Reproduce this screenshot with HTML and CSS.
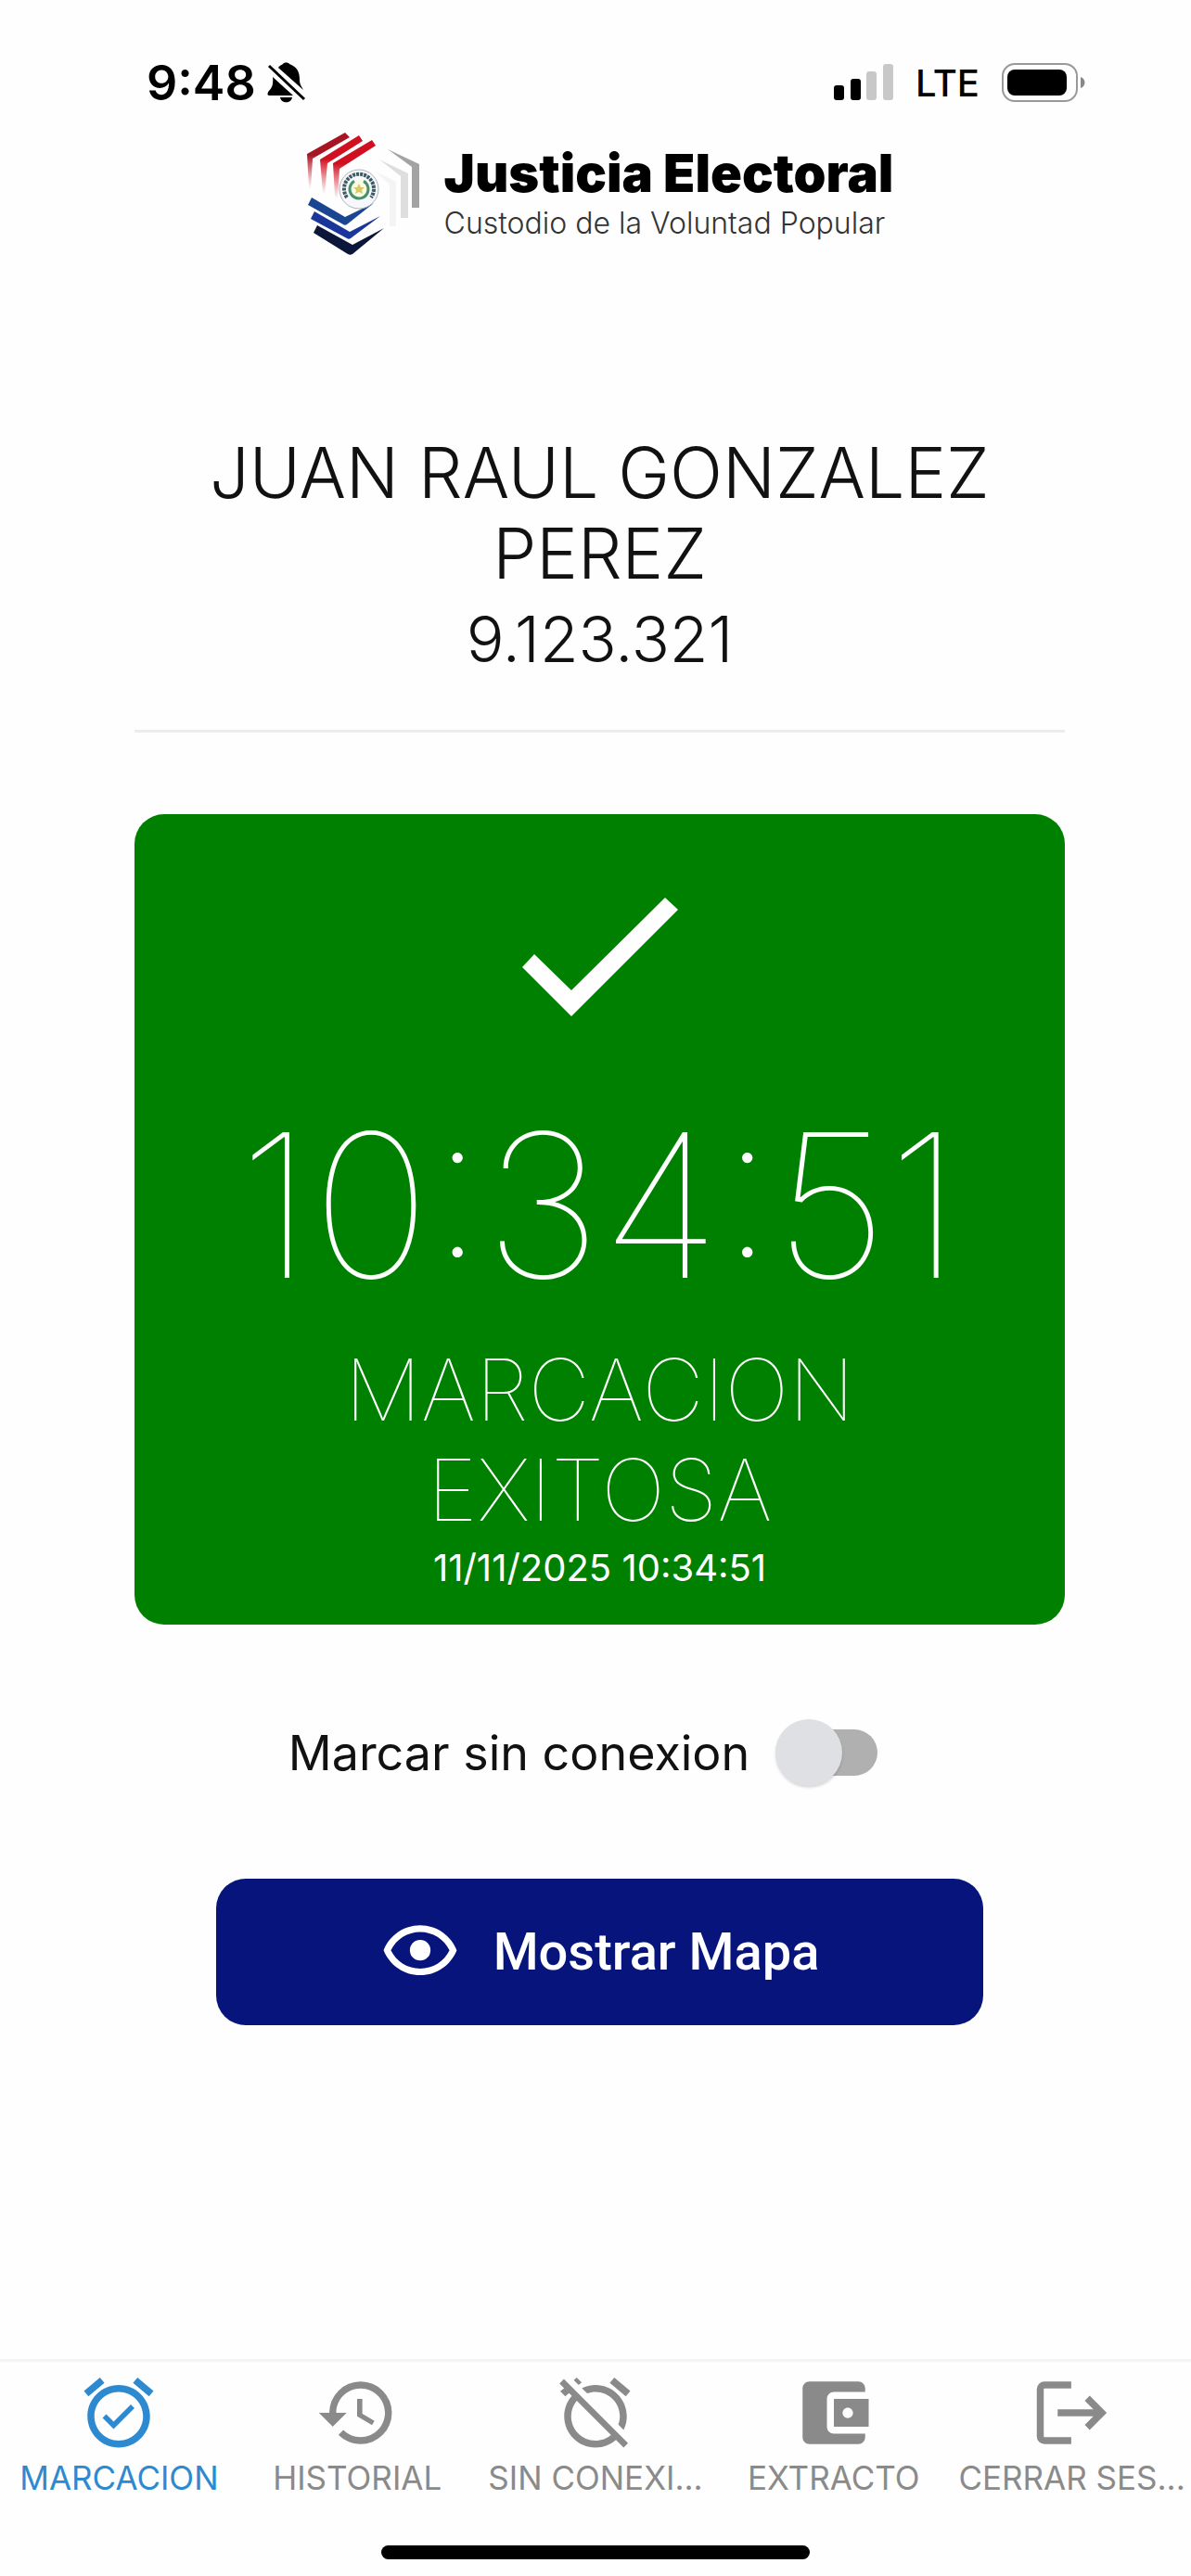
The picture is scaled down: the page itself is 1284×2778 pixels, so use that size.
FILE: index.html
```html
<!DOCTYPE html>
<html lang="es">
<head>
    <meta charset="UTF-8">
    <meta name="viewport" content="width=device-width, initial-scale=1.0">
    <title>Justicia Electoral - Marcacion</title>
    <link rel="stylesheet" href="styles.css">
</head>
<body>
    <div class="status-bar">
        <div class="status-left">
            <span class="status-time">9:48</span>
            <svg class="icon-bell" viewBox="0 0 42 44" aria-hidden="true">
                <path d="M12 6C14 3 16 3 17 2c1-2 6-2 7 0 8 3 11 8 11 17 0 5 2 7 4 11z"/>
                <path d="M6 16l22 20H2c-2 0-2-3 0-5 3-3 5-7 4-15z"/>
                <path d="M14 38h13c-1 7-12 7-13 0z"/>
                <path class="bell-slash" d="M2 4l38 36"/>
            </svg>
        </div>
        <div class="status-right">
            <svg class="icon-signal" viewBox="0 0 64 40" aria-hidden="true">
                <rect x="0" y="23" width="11" height="16" rx="3"/>
                <rect x="18" y="16" width="11" height="23" rx="3"/>
                <rect class="signal-off" x="35" y="8" width="11" height="31" rx="3"/>
                <rect class="signal-off" x="53" y="0" width="11" height="39" rx="3"/>
            </svg>
            <span class="status-network">LTE</span>
            <svg class="icon-battery" viewBox="0 0 90 42" aria-hidden="true">
                <rect class="battery-case" x="1" y="1" width="80" height="40" rx="13"/>
                <rect x="6" y="7" width="64" height="28" rx="8"/>
                <path class="battery-tip" d="M85 15c6 2 6 10 0 12z"/>
            </svg>
        </div>
    </div>

    <main class="content">
        <header class="brand">
            <svg class="brand-logo" viewBox="0 0 124 134" aria-hidden="true">
                <defs>
                    <linearGradient id="fadeRed" x1="0" y1="0" x2="0" y2="1">
                        <stop offset="0.4" stop-color="#d01020"/>
                        <stop offset="1" stop-color="#e04050" stop-opacity="0"/>
                    </linearGradient>
                    <linearGradient id="darkRed" x1="0" y1="0" x2="0" y2="1">
                        <stop offset="0.4" stop-color="#a81522"/>
                        <stop offset="1" stop-color="#d04050" stop-opacity="0"/>
                    </linearGradient>
                </defs>
                <path fill="url(#darkRed)" d="M1 24L42 1l5 5L7 29 5 62 3 60z"/>
                <path fill="url(#fadeRed)" d="M15 30L57 4l4 6-38 24-3 34-2-2z"/>
                <path fill="url(#fadeRed)" d="M29 34L71 9l4 6-39 25-2 33-3-4z"/>
                <path fill="#1a4590" d="M6 71l36 21 31-15-29 23c-1 1-3 1-4 0L2 79z"/>
                <path fill="#1b369b" d="M9 86l38 22 33-17-32 24c-1 1-3 1-4 0L5 94z"/>
                <path fill="#0b1638" d="M12 101l38 21 34-18-34 28c-2 1-3 1-5 0L8 109z"/>
                <path fill="#a3a3a3" d="M88 19l34 16v47h-8V38z"/>
                <path fill="#dedede" d="M79 30l31 15v48h-8V48z"/>
                <path fill="#f4f4f4" d="M75 43l22 11v48h-7V57z"/>
                <circle cx="57" cy="62" r="21" fill="#f7f8fb" stroke="#aeb3b8"/>
                <path d="M44 71a16 16 0 1 1 26 0" fill="none" stroke="#3f5a62" stroke-width="4" stroke-dasharray="3 1"/>
                <circle cx="57" cy="62" r="10" fill="#fbfae6" stroke="#459268" stroke-width="3" stroke-dasharray="52 11" transform="rotate(-60 57 62)"/>
                <path d="M57 56l2 4h4l-3 3 1 4-4-2-4 2 1-4-3-3h4z" fill="#d8cb66"/>
            </svg>
            <div class="brand-text">
                <h1>Justicia Electoral</h1>
                <p>Custodio de la Voluntad Popular</p>
            </div>
        </header>

        <section class="person">
            <h2>JUAN RAUL GONZALEZ PEREZ</h2>
            <p>9.123.321</p>
        </section>

        <section class="result-card">
            <svg class="icon-check" viewBox="0 0 168 128" aria-hidden="true">
                <path d="M0 75l13-14 40 39L154 0l14 13L53 128z"/>
            </svg>
            <time class="result-clock">10:34:51</time>
            <p class="result-message">MARCACION EXITOSA</p>
            <time class="result-date">11/11/2025 10:34:51</time>
        </section>

        <div class="offline-row">
            <label for="offline">Marcar sin conexion</label>
            <input type="checkbox" id="offline" class="switch">
        </div>

        <button type="button" class="map-button">
            <svg class="icon-eye" viewBox="0 0 24 24" aria-hidden="true">
                <path d="M12 6c3.79 0 7.17 2.13 8.82 5.5C19.17 14.87 15.79 17 12 17s-7.17-2.13-8.82-5.5C4.83 8.13 8.21 6 12 6m0-2C7 4 2.73 7.11 1 11.5 2.73 15.89 7 19 12 19s9.27-3.11 11-7.5C21.27 7.11 17 4 12 4z"/>
                <circle cx="12" cy="11.5" r="3.1"/>
            </svg>
            Mostrar Mapa
        </button>
    </main>

    <nav class="tab-bar">
        <div class="tabs">
            <a href="#marcacion" class="tab active">
                <svg viewBox="0 0 24 24" aria-hidden="true"><path d="M22 5.72l-4.6-3.86-1.29 1.53 4.6 3.86L22 5.72zM7.88 3.39L6.6 1.86 2 5.71l1.29 1.53 4.59-3.85zM12 4c-4.97 0-9 4.03-9 9s4.02 9 9 9c4.97 0 9-4.03 9-9s-4.03-9-9-9zm0 16c-3.87 0-7-3.13-7-7s3.13-7 7-7 7 3.13 7 7-3.13 7-7 7zm-1.46-5.47L8.41 12.4l-1.06 1.06 3.18 3.18 6-6-1.06-1.06-4.93 4.95z"/></svg>
                <span>MARCACION</span>
            </a>
            <a href="#historial" class="tab">
                <svg viewBox="0 0 24 24" aria-hidden="true"><path d="M13 3a9 9 0 0 0-9 9H1l3.89 3.89.07.14L9 12H6c0-3.87 3.13-7 7-7s7 3.13 7 7-3.13 7-7 7c-1.93 0-3.68-.79-4.94-2.06l-1.42 1.42C8.27 19.99 10.51 21 13 21a9 9 0 0 0 0-18zm-1 5v5l4.28 2.54.72-1.21-3.5-2.08V8H12z"/></svg>
                <span>HISTORIAL</span>
            </a>
            <a href="#sin-conexion" class="tab">
                <svg viewBox="0 0 24 24" aria-hidden="true"><path d="M12 6c3.87 0 7 3.13 7 7 0 .84-.16 1.65-.43 2.4l1.52 1.52c.58-1.19.91-2.51.91-3.92 0-4.97-4.03-9-9-9-1.41 0-2.73.33-3.92.91L9.6 6.43C10.35 6.16 11.16 6 12 6zm10-.28l-4.6-3.86-1.29 1.53 4.6 3.86L22 5.72zM2.92 2.29L1.65 3.57 2.98 4.9l-1.11.93 1.42 1.42 1.11-.94.8.8C3.83 8.69 3 10.75 3 13c0 4.97 4.02 9 9 9 2.25 0 4.31-.83 5.89-2.2l2.2 2.2 1.27-1.27L3.89 3.27l-.97-.98zm13.55 16.1C15.26 19.39 13.7 20 12 20c-3.87 0-7-3.13-7-7 0-1.7.61-3.26 1.61-4.47l9.86 9.86zM8.02 3.28L6.6 1.86l-.86.71 1.42 1.42.86-.71z"/></svg>
                <span>SIN CONEXI...</span>
            </a>
            <a href="#extracto" class="tab">
                <svg viewBox="0 0 24 24" aria-hidden="true"><path d="M21 18v1c0 1.1-.9 2-2 2H5c-1.11 0-2-.9-2-2V5c0-1.1.89-2 2-2h14c1.1 0 2 .9 2 2v1h-9c-1.11 0-2 .9-2 2v8c0 1.1.89 2 2 2h9zm-9-2h10V8H12v8zm4-2.5c-.83 0-1.5-.67-1.5-1.5s.67-1.5 1.5-1.5 1.5.67 1.5 1.5-.67 1.5-1.5 1.5z"/></svg>
                <span>EXTRACTO</span>
            </a>
            <a href="#salir" class="tab">
                <svg viewBox="0 0 24 24" aria-hidden="true"><path class="line" d="M11.7 4H4a1.2 1.2 0 0 0-1.2 1.2v13.6A1.2 1.2 0 0 0 4 20h7.7M7.8 12h12.4M16.3 7.8l4.2 4.2-4.2 4.2"/></svg>
                <span>CERRAR SES...</span>
            </a>
        </div>
        <div class="home-indicator"></div>
    </nav>
</body>
</html>
```

FILE: styles.css
```css
* {
    box-sizing: border-box;
}

body {
    font-family: "Inter", "Liberation Sans", sans-serif;
    background-color: #fefefe;
    color: #111;
    margin: 0;
    display: flex;
    flex-direction: column;
    min-height: 100vh;
}

h1, h2, p {
    margin: 0;
}

svg {
    display: block;
    flex-shrink: 0;
}

/* Status bar */
.status-bar {
    display: flex;
    justify-content: space-between;
    padding: 60px 114px 0 158px;
    color: #000;
}

.status-left,
.status-right {
    display: flex;
    align-items: center;
    height: 58px;
}

.status-left {
    gap: 12px;
}

.status-right {
    gap: 24px;
}

.status-time {
    font-size: 52px;
    font-weight: 600;
}

.status-network {
    font-size: 40px;
    font-weight: 500;
}

.icon-bell {
    width: 42px;
    height: 44px;
}

.bell-slash {
    stroke: #000;
    stroke-width: 3;
}

.icon-signal {
    width: 64px;
    height: 40px;
}

.signal-off {
    fill: #c8c8c8;
}

.icon-battery {
    width: 90px;
    height: 42px;
}

.battery-case {
    fill: none;
    stroke: #999;
    stroke-width: 2;
}

.battery-tip {
    fill: #888;
}

/* Main column */
.content {
    flex: 1;
    display: flex;
    flex-direction: column;
    padding: 24px 136px 60px 145px;
}

.brand {
    display: flex;
    justify-content: center;
    align-items: center;
    gap: 25px;
}

.brand-logo {
    width: 124px;
    height: 134px;
}

.brand-text h1 {
    font-size: 56px;
    font-weight: 900;
    line-height: 60px;
    color: #000;
}

.brand-text p {
    margin-top: 4px;
    font-size: 32px;
    font-weight: 300;
    line-height: 40px;
    color: #333;
}

.person {
    margin-top: 190px;
    padding-bottom: 54px;
    border-bottom: 3px solid #ececec;
    text-align: center;
}

.person h2,
.person p {
    font-size: 75px;
    font-weight: 300;
    line-height: 87px;
}

.person p {
    margin-top: 6px;
    font-size: 68px;
}

.result-card {
    display: flex;
    flex-direction: column;
    align-items: center;
    margin-top: 88px;
    padding: 90px 60px 31px;
    border-radius: 32px;
    background-color: #008000;
    color: white;
    text-align: center;
}

.icon-check {
    width: 168px;
    height: 128px;
    fill: white;
}

.result-clock {
    margin-top: 114px;
    font-size: 216px;
    font-weight: 100;
    line-height: 180px;
}

.result-message {
    margin-top: 55px;
    font-size: 92px;
    font-weight: 100;
    line-height: 108px;
}

.result-date {
    font-size: 40px;
    line-height: 60px;
}

/* Offline switch */
.offline-row {
    display: flex;
    justify-content: center;
    align-items: center;
    gap: 28px;
    height: 76px;
    margin-top: 100px;
    padding-right: 36px;
}

.offline-row label {
    font-size: 52px;
}

.switch {
    appearance: none;
    position: relative;
    width: 110px;
    height: 72px;
    margin: 0;
    cursor: pointer;
}

.switch::before {
    content: "";
    position: absolute;
    inset: 11px 0 11px 10px;
    border-radius: 25px;
    background-color: #b0b0b0;
}

.switch::after {
    content: "";
    position: absolute;
    top: 0;
    left: 0;
    width: 72px;
    height: 72px;
    border-radius: 50%;
    background-color: #dfe0e3;
    box-shadow: 0 2px 3px rgba(0, 0, 0, 0.15);
}

.switch:checked::after {
    left: 38px;
}

.map-button {
    display: flex;
    justify-content: center;
    align-items: center;
    gap: 36px;
    height: 158px;
    margin: 98px 88px 0;
    border: none;
    border-radius: 32px;
    background-color: #06147b;
    color: white;
    font-family: "Roboto", sans-serif;
    font-size: 56px;
    font-weight: 500;
    cursor: pointer;
}

.icon-eye {
    width: 86px;
    height: 86px;
    fill: white;
}

/* Bottom tabs */
.tab-bar {
    border-top: 3px solid #f4f4f4;
    padding: 10px 0 18px;
}

.tabs {
    display: grid;
    grid-template-columns: repeat(5, 1fr);
}

.tab {
    display: flex;
    flex-direction: column;
    align-items: center;
    gap: 5px;
    color: #8a8a8a;
    font-size: 35px;
    line-height: 40px;
    white-space: nowrap;
    text-decoration: none;
}

.tab svg {
    width: 90px;
    height: 90px;
    fill: currentColor;
}

.tab .line {
    fill: none;
    stroke: currentColor;
    stroke-width: 2;
}

.tab.active {
    color: #2e8ad0;
}

.home-indicator {
    width: 36%;
    height: 15px;
    margin: 53px auto 0;
    border-radius: 8px;
    background-color: #000;
}
```
